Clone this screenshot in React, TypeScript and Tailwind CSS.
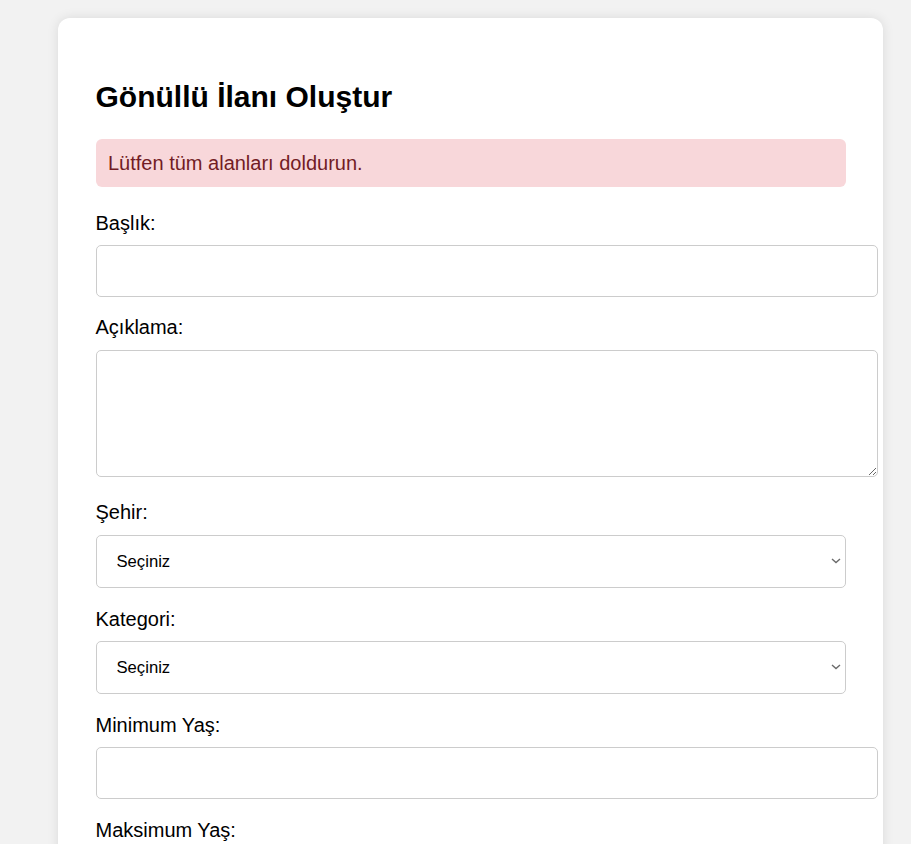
import React from "react";

const labelCls = "block text-[20px] leading-[23px] text-black";
const inputCls =
  "block w-[782px] h-[52px] border border-[#cccccc] rounded-[5px] px-[15px] text-[16.67px] bg-white outline-none";

function Select() {
  return (
    <div className="relative w-[750px] mt-[10.5px]">
      <select
        className="block w-[750px] h-[53px] border border-[#cccccc] rounded-[5px] pl-[20px] pr-[30px] text-[16.67px] text-black bg-white outline-none appearance-none"
        defaultValue=""
      >
        <option value="">Seçiniz</option>
      </select>
      <svg
        className="absolute right-[5px] top-[23px] pointer-events-none"
        width="10"
        height="6"
        viewBox="0 0 10 6"
      >
        <path d="M1 1 L5 4.5 L9 1" fill="none" stroke="#6b6b6b" strokeWidth="1.4" />
      </svg>
    </div>
  );
}

export default function App() {
  return (
    <div
      className="min-h-[844px] bg-[#f2f2f2] pt-[18px] pb-[40px]"
      style={{ fontFamily: '"Liberation Sans", Arial, sans-serif' }}
    >
      <div className="ml-[58px] w-[825px] bg-white rounded-[12px] shadow-[0_0_12px_rgba(0,0,0,0.1)] px-[37.5px] pt-[37px] pb-[40px]">
        <h2 className="mt-[25px] mb-[25px] text-[30px] leading-[34px] font-bold text-black">
          Gönüllü İlanı Oluştur
        </h2>
        <div className="bg-[#f8d7da] text-[#721c24] rounded-[6px] px-[12.5px] py-[12.5px] text-[20px] leading-[23px] mb-[25px]">
          Lütfen tüm alanları doldurun.
        </div>
        <form>
          <label className={labelCls}>Başlık:</label>
          <input type="text" className={inputCls + " mt-[10px]"} />

          <label className={labelCls + " mt-[19px]"}>Açıklama:</label>
          <textarea className="block w-[782px] h-[127px] border border-[#cccccc] rounded-[5px] px-[15px] py-[15px] text-[16.67px] bg-white outline-none mt-[10.5px]" />

          <label className={labelCls + " mt-[24.5px]"}>Şehir:</label>
          <Select />

          <label className={labelCls + " mt-[20px]"}>Kategori:</label>
          <Select />

          <label className={labelCls + " mt-[19.5px]"}>Minimum Yaş:</label>
          <input type="number" className={inputCls + " mt-[10.5px]"} />

          <label className={labelCls + " mt-[19.5px]"}>Maksimum Yaş:</label>
          <input type="number" className={inputCls + " mt-[10.5px]"} />
        </form>
      </div>
    </div>
  );
}
